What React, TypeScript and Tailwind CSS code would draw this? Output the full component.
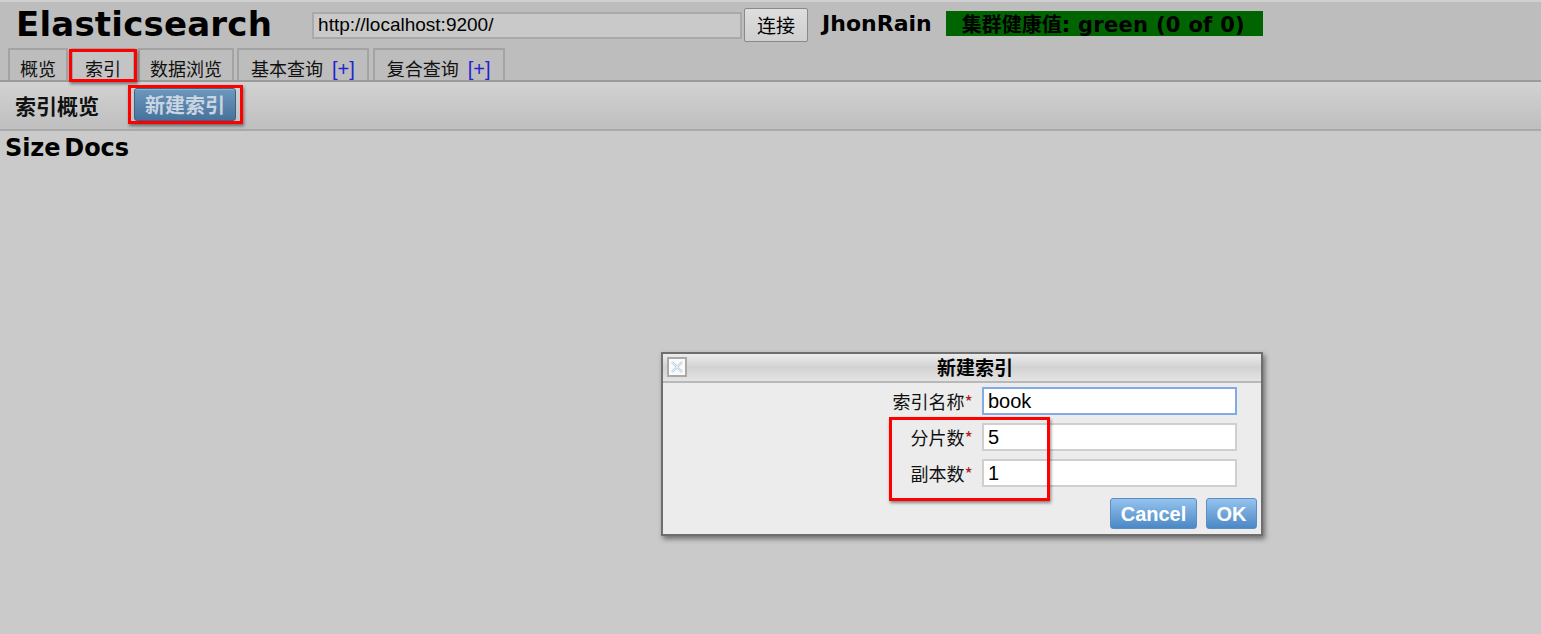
import React from 'react';

const cjk = "font-['Noto_Sans_CJK_SC',sans-serif]";
const verdana = "font-['DejaVu_Sans','Noto_Sans_CJK_SC',sans-serif]";
const arial = "font-['Liberation_Sans','Noto_Sans_CJK_SC',sans-serif]";

const Mark: React.FC<{ className: string }> = ({ className }) => (
  <div className={`pointer-events-none absolute border-[3px] border-[#ff0000] shadow-[1px_2px_3px_rgba(0,0,0,0.45)] ${className}`} />
);

const Tab: React.FC<{ label: string; plus?: boolean; active?: boolean; pad: string }> = ({ label, plus, active, pad }) => (
  <div
    className={`h-[32px] border-2 border-b-0 border-[#a3a3a3] pt-[6px] text-[18px] leading-[24px] text-[#111] whitespace-nowrap ${pad} ${cjk} ${
      active ? 'bg-[#c4c4c4]' : 'bg-[#bdbdbd]'
    }`}
  >
    {label}
    {plus && <span className={`ml-[9px] text-[20px] text-[#2323d0] ${arial}`}>[+]</span>}
  </div>
);

const Field: React.FC<{ label: string; value: string; focused?: boolean }> = ({ label, value, focused }) => (
  <div className="flex items-center h-[28px]">
    <label className={`w-[319px] pr-[9px] text-right text-[18px] text-[#111] ${cjk}`}>
      {label}
      <span className="text-[#b01c1c]">*</span>
    </label>
    <input
      readOnly
      value={value}
      className={`h-[28px] w-[255px] border-2 bg-white px-[4px] text-[20px] text-black outline-none ${arial} ${
        focused ? 'border-[#82aae6]' : 'border-[#cfcfcf]'
      }`}
    />
  </div>
);

const DlgButton: React.FC<{ label: string; w: string }> = ({ label, w }) => (
  <button
    className={`h-[31px] ${w} rounded-[3px] border border-[#5b8dc6] bg-gradient-to-b from-[#94c3ee] to-[#4c88c5] text-[20px] font-bold text-white leading-none ${arial}`}
  >
    {label}
  </button>
);

export default function App() {
  return (
    <div className="relative min-h-screen w-full overflow-hidden bg-[#cacaca]">
      <header className="bg-[#bdbdbd] border-t-2 border-[#d0d0d0]">
        <div className="flex items-center h-[46px] pl-4">
          <h1 className={`text-[34px] font-bold leading-none text-black tracking-[0.2px] mt-[-3px] ${verdana}`}>Elasticsearch</h1>
          <input
            readOnly
            value="http://localhost:9200/"
            className={`ml-[40px] h-[27px] w-[430px] border-2 border-[#a9a9a9] bg-[#c9c9c9] px-[4px] text-[19px] text-black outline-none ${arial}`}
          />
          <button
            className={`ml-[2px] h-[34px] w-[64px] rounded-[2px] border border-[#8a8a8a] bg-gradient-to-b from-[#dedede] to-[#cfcfcf] text-[19px] text-black ${cjk}`}
          >
            连接
          </button>
          <span className={`ml-[14px] text-[22px] font-bold text-black mt-[-3px] ${verdana}`}>JhonRain</span>
          <div className="ml-[14px] mt-[-3px] h-[25px] w-[317px] bg-[#006400] pl-[16px] font-bold leading-[25px] text-black whitespace-nowrap">
            <span className={`text-[20px] ${cjk}`}>集群健康值</span>
            <span className={`text-[21px] tracking-[0.3px] ${verdana}`}>: green (0 of 0)</span>
          </div>
        </div>
        <div className="relative flex pl-2 border-b-2 border-[#9b9b9b]">
          <Tab label="概览" pad="px-[10px]" />
          <div className="relative ml-[3px]">
            <Tab label="索引" active pad="px-[12px]" />
            <Mark className="left-[-2px] top-[1px] w-[68px] h-[33px]" />
          </div>
          <div className="ml-[3px]">
            <Tab label="数据浏览" pad="px-[10px]" />
          </div>
          <div className="ml-[3px]">
            <Tab label="基本查询" plus pad="px-[12px]" />
          </div>
          <div className="ml-[4px]">
            <Tab label="复合查询" plus pad="px-[12px]" />
          </div>
        </div>
      </header>

      <div className="flex items-center h-[49px] border-b-2 border-[#a9a9a9] bg-gradient-to-b from-[#d2d2d2] to-[#bfbfbf] pl-[15px]">
        <span className={`text-[21px] font-bold text-[#111] ${cjk}`}>索引概览</span>
        <div className="relative ml-[35px] mt-[-2px]">
          <button
            className={`h-[33px] w-[102px] rounded-[3px] border border-[#3d6287] bg-gradient-to-b from-[#6e97bc] to-[#47729c] text-[20px] font-bold leading-none text-[#c9d5e0] shadow-[inset_0_1px_0_rgba(255,255,255,0.25)] ${cjk}`}
          >
            新建索引
          </button>
          <Mark className="left-[-6px] top-[-3px] w-[115px] h-[39px]" />
        </div>
      </div>

      <div className={`flex gap-[4px] pl-[5px] pt-[2px] text-[24px] font-bold leading-[30px] text-black tracking-[-0.1px] ${verdana}`}>
        <span>Size</span>
        <span>Docs</span>
      </div>

      <div className="absolute left-[661px] top-[352px] w-[602px] h-[184px] border-2 border-[#6e6e6e] bg-[#ececec] shadow-[2px_3px_5px_rgba(0,0,0,0.45)]">
        <div className="relative flex h-[29px] items-center justify-center border-b-2 border-[#b8b8b8] bg-gradient-to-b from-[#ececec] via-[#d2d2d2] to-[#e4e4e4] pl-[26px]">
          <svg className="absolute left-[4px] top-[3px]" width="20" height="20" viewBox="0 0 20 20">
            <rect x="1" y="1" width="18" height="18" fill="#fafafa" stroke="#a9a9a9" strokeWidth="2" />
            <path d="M5 5 L15 15 M15 5 L5 15" stroke="#b9cfe6" strokeWidth="2.4" />
            <path d="M5 5 L15 15 M15 5 L5 15" stroke="#f4f4f4" strokeWidth="0.9" />
          </svg>
          <span className={`text-[19px] font-bold text-black ${cjk}`}>新建索引</span>
        </div>
        <div className="flex flex-col gap-[8px] pt-[4px]">
          <Field label="索引名称" value="book" focused />
          <Field label="分片数" value="5" />
          <Field label="副本数" value="1" />
        </div>
        <div className="flex justify-end gap-[9px] pr-[4px] pt-[11px]">
          <DlgButton label="Cancel" w="w-[87px]" />
          <DlgButton label="OK" w="w-[51px]" />
        </div>
        <Mark className="left-[226px] top-[63px] w-[161px] h-[84px]" />
      </div>
    </div>
  );
}
